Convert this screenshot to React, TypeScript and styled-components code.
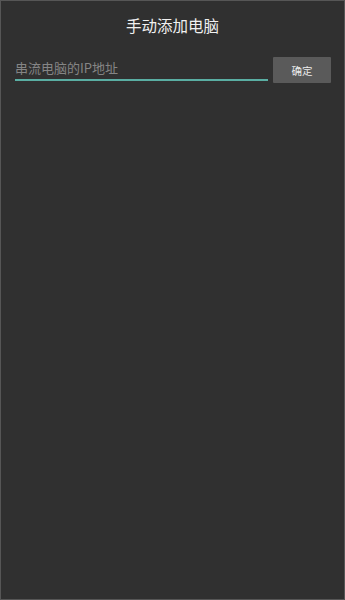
import React from 'react';
import styled, { createGlobalStyle } from 'styled-components';

const GlobalStyle = createGlobalStyle`
  html, body {
    margin: 0;
    padding: 0;
    background: #303030;
  }
  * {
    box-sizing: border-box;
  }
`;

const Screen = styled.div`
  width: 345px;
  height: 600px;
  background: #303030;
  border: 1px solid #565656;
  font-family: 'Noto Sans CJK SC', 'Noto Sans', sans-serif;
  display: flex;
  flex-direction: column;
`;

const Header = styled.header`
  height: 47px;
  display: flex;
  align-items: center;
  justify-content: center;
  color: #f0f0f0;
  font-size: 15.5px;
  padding-top: 1px;
`;

const Row = styled.div`
  display: flex;
  align-items: flex-start;
  gap: 5px;
  margin-top: 9px;
  padding: 0 13px 0 14px;
`;

const AddressInput = styled.input`
  flex: 1;
  min-width: 0;
  height: 24px;
  padding: 0 0 1px 0;
  background: transparent;
  border: none;
  border-bottom: 2px solid #5aaea3;
  outline: none;
  color: #e6e6e6;
  font-family: inherit;
  font-size: 13px;

  &::placeholder {
    color: #858585;
  }
`;

const ConfirmButton = styled.button`
  width: 58px;
  height: 26px;
  border: none;
  border-radius: 1px;
  background: #5a5a5a;
  color: #ececec;
  font-family: inherit;
  font-size: 10.5px;
  padding: 0;
  cursor: pointer;
`;

export default function App() {
  return (
    <>
      <GlobalStyle />
      <Screen>
        <Header>手动添加电脑</Header>
        <Row>
          <AddressInput placeholder="串流电脑的IP地址" />
          <ConfirmButton>确定</ConfirmButton>
        </Row>
      </Screen>
    </>
  );
}
